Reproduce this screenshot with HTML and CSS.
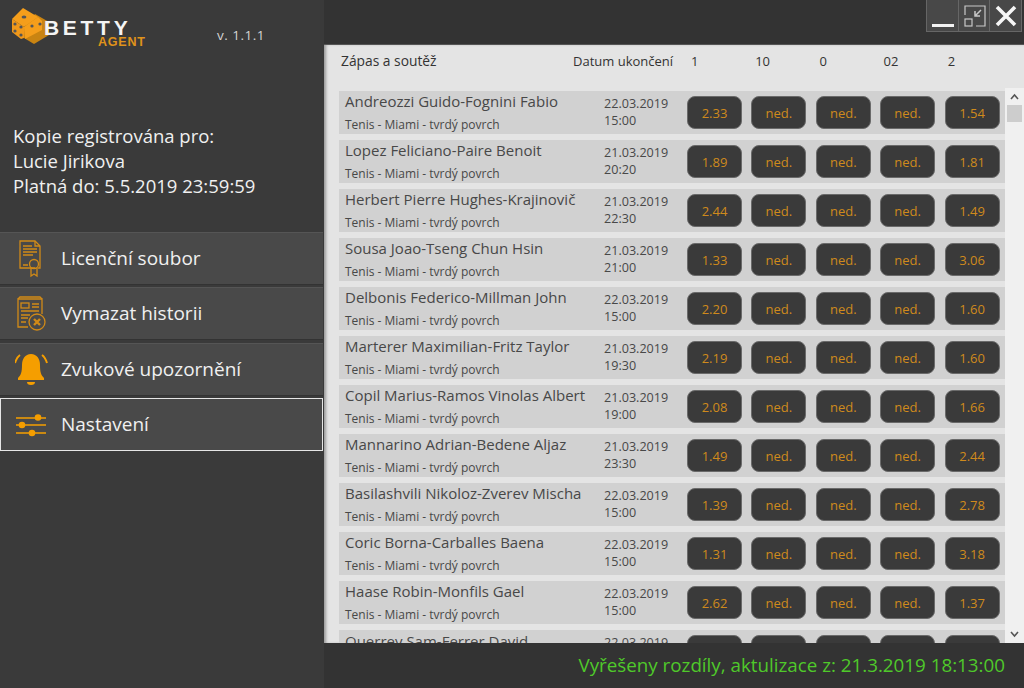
FILE: index.html
```html
<!DOCTYPE html>
<html lang="en">
<head>
  <meta charset="UTF-8">
  <title>Betty Agent</title>
  <link rel="stylesheet" href="styles.css">
</head>
<body>

<div class="app">
  <div class="sidebar">
    <div class="brand">
      <svg class="dice" width="40" height="36" viewBox="0 0 40 36">
        <polygon points="24,6 38,14 38,27 23,36 13,30 13,20" fill="#c98412"/>
        <polygon points="12,0 27,9 13,19 1,11" fill="#f59e1b"/>
        <polygon points="1,11 13,19 13,30 10,31 1,24" fill="#f0981a"/>
        <polygon points="13,19 27,9 31,13 31,22 14,31" fill="#f59e1b"/>
        <ellipse cx="13" cy="9" rx="2.4" ry="1.5" fill="#555"/>
        <circle cx="4" cy="16" r="1.6" fill="#555"/>
        <circle cx="10" cy="19" r="1.6" fill="#555"/>
        <circle cx="4" cy="23" r="1.6" fill="#555"/>
        <circle cx="10" cy="27" r="1.6" fill="#555"/>
        <circle cx="21" cy="18" r="1.6" fill="#555"/>
        <circle cx="29" cy="16" r="1.6" fill="#555"/>
      </svg>
      <div class="brand-name">
        <div class="betty">BETTY</div>
        <div class="agent">AGENT</div>
      </div>
      <div class="version">v. 1.1.1</div>
    </div>

    <div class="license">
      <div>Kopie registrována pro:</div>
      <div>Lucie Jirikova</div>
      <div>Platná do: 5.5.2019 23:59:59</div>
    </div>

    <div class="menu">
      <div class="menu-item">
        <svg class="menu-icon" width="34" height="38" viewBox="0 0 34 38" fill="none" stroke="#d18a17" stroke-width="1.3">
          <path d="M20 28H5V1h15l5 5v22h-2"/>
          <path d="M20 1v5h5"/>
          <path d="M8 6h9M8 9h14M8 12h14M8 15h10M8 25h5"/>
          <circle cx="19" cy="24" r="4.5"/>
          <path d="M16 28v8l3-2 3 2v-8"/>
        </svg>
        <span>Licenční soubor</span>
      </div>
      <div class="menu-item">
        <svg class="menu-icon" width="34" height="38" viewBox="0 0 34 38" fill="none" stroke="#d18a17" stroke-width="1.3">
          <path d="M13 32H3V4h24v15"/>
          <path d="M3 4l2-2h20l2 2"/>
          <rect x="6" y="8" width="8" height="5"/>
          <path d="M17 9h7M17 12h7M6 16h18M6 20h9M6 23h7M6 27h5"/>
          <circle cx="22" cy="27" r="8"/>
          <path d="M19 24l6 6M25 24l-6 6" stroke-width="2.4"/>
        </svg>
        <span>Vymazat historii</span>
      </div>
      <div class="menu-item">
        <svg class="menu-icon" width="34" height="38" viewBox="0 0 34 38">
          <path d="M16 3c-6 0-9 5-9 11 0 7-1 10-4 13v2h26v-2c-3-3-4-6-4-13 0-6-3-11-9-11z" fill="#f59e00"/>
          <path d="M12 31h8a4 3 0 0 1-8 0z" fill="#f59e00"/>
          <path d="M5 4C2 6 1 9 0 12M27 4c3 2 4 5 5 8" fill="none" stroke="#f59e00" stroke-width="2"/>
        </svg>
        <span>Zvukové upozornění</span>
      </div>
      <div class="menu-item selected">
        <svg class="menu-icon" width="34" height="38" viewBox="0 0 34 38" fill="#f59e00" stroke="#f59e00" stroke-width="1.6">
          <path d="M1 12h30M1 19h30M1 27h30"/>
          <circle cx="23" cy="11.500" r="2.500"/>
          <circle cx="7" cy="19" r="2.500"/>
          <circle cx="17" cy="27" r="2.500"/>
        </svg>
        <span>Nastavení</span>
      </div>
    </div>
  </div>

  <div class="main">
    <div class="topbar">
      <div class="window-buttons">
        <div class="win-btn">
          <svg width="30" height="30" viewBox="0 0 30 30"><rect x="5" y="23" width="22" height="3" fill="#f2f2f2"/></svg>
        </div>
        <div class="win-btn">
          <svg width="30" height="30" viewBox="0 0 30 30" fill="none" stroke="#c8c8c8" stroke-width="1.2">
            <path d="M6 14V5h20v20h-9"/>
            <rect x="6" y="18" width="7" height="7"/>
            <path d="M22 9l-6 6M16 10v5h5" stroke-width="1.5"/>
          </svg>
        </div>
        <div class="win-btn">
          <svg width="30" height="30" viewBox="0 0 30 30"><path d="M6 6l18 18M24 6L6 24" stroke="#f6f6f6" stroke-width="3.600"/></svg>
        </div>
      </div>
    </div>

    <div class="content">
      <div class="table-head">
        <div class="head-match">Zápas a soutěž</div>
        <div class="head-date">Datum ukončení</div>
        <div class="head-odd">1</div>
        <div class="head-odd">10</div>
        <div class="head-odd">0</div>
        <div class="head-odd">02</div>
        <div class="head-odd">2</div>
      </div>

      <div class="list-area">
        <div class="rows">
          <div class="row">
            <div class="match"><div class="match-name">Andreozzi Guido-Fognini Fabio</div><div class="match-info">Tenis - Miami - tvrdý povrch</div></div>
            <div class="date">22.03.2019<br>15:00</div>
            <div class="odd">2.33</div><div class="odd">ned.</div><div class="odd">ned.</div><div class="odd">ned.</div><div class="odd">1.54</div>
          </div>
          <div class="row">
            <div class="match"><div class="match-name">Lopez Feliciano-Paire Benoit</div><div class="match-info">Tenis - Miami - tvrdý povrch</div></div>
            <div class="date">21.03.2019<br>20:20</div>
            <div class="odd">1.89</div><div class="odd">ned.</div><div class="odd">ned.</div><div class="odd">ned.</div><div class="odd">1.81</div>
          </div>
          <div class="row">
            <div class="match"><div class="match-name">Herbert Pierre Hughes-Krajinovič</div><div class="match-info">Tenis - Miami - tvrdý povrch</div></div>
            <div class="date">21.03.2019<br>22:30</div>
            <div class="odd">2.44</div><div class="odd">ned.</div><div class="odd">ned.</div><div class="odd">ned.</div><div class="odd">1.49</div>
          </div>
          <div class="row">
            <div class="match"><div class="match-name">Sousa Joao-Tseng Chun Hsin</div><div class="match-info">Tenis - Miami - tvrdý povrch</div></div>
            <div class="date">21.03.2019<br>21:00</div>
            <div class="odd">1.33</div><div class="odd">ned.</div><div class="odd">ned.</div><div class="odd">ned.</div><div class="odd">3.06</div>
          </div>
          <div class="row">
            <div class="match"><div class="match-name">Delbonis Federico-Millman John</div><div class="match-info">Tenis - Miami - tvrdý povrch</div></div>
            <div class="date">22.03.2019<br>15:00</div>
            <div class="odd">2.20</div><div class="odd">ned.</div><div class="odd">ned.</div><div class="odd">ned.</div><div class="odd">1.60</div>
          </div>
          <div class="row">
            <div class="match"><div class="match-name">Marterer Maximilian-Fritz Taylor</div><div class="match-info">Tenis - Miami - tvrdý povrch</div></div>
            <div class="date">21.03.2019<br>19:30</div>
            <div class="odd">2.19</div><div class="odd">ned.</div><div class="odd">ned.</div><div class="odd">ned.</div><div class="odd">1.60</div>
          </div>
          <div class="row">
            <div class="match"><div class="match-name">Copil Marius-Ramos Vinolas Albert</div><div class="match-info">Tenis - Miami - tvrdý povrch</div></div>
            <div class="date">21.03.2019<br>19:00</div>
            <div class="odd">2.08</div><div class="odd">ned.</div><div class="odd">ned.</div><div class="odd">ned.</div><div class="odd">1.66</div>
          </div>
          <div class="row">
            <div class="match"><div class="match-name">Mannarino Adrian-Bedene Aljaz</div><div class="match-info">Tenis - Miami - tvrdý povrch</div></div>
            <div class="date">21.03.2019<br>23:30</div>
            <div class="odd">1.49</div><div class="odd">ned.</div><div class="odd">ned.</div><div class="odd">ned.</div><div class="odd">2.44</div>
          </div>
          <div class="row">
            <div class="match"><div class="match-name">Basilashvili Nikoloz-Zverev Mischa</div><div class="match-info">Tenis - Miami - tvrdý povrch</div></div>
            <div class="date">22.03.2019<br>15:00</div>
            <div class="odd">1.39</div><div class="odd">ned.</div><div class="odd">ned.</div><div class="odd">ned.</div><div class="odd">2.78</div>
          </div>
          <div class="row">
            <div class="match"><div class="match-name">Coric Borna-Carballes Baena</div><div class="match-info">Tenis - Miami - tvrdý povrch</div></div>
            <div class="date">22.03.2019<br>15:00</div>
            <div class="odd">1.31</div><div class="odd">ned.</div><div class="odd">ned.</div><div class="odd">ned.</div><div class="odd">3.18</div>
          </div>
          <div class="row">
            <div class="match"><div class="match-name">Haase Robin-Monfils Gael</div><div class="match-info">Tenis - Miami - tvrdý povrch</div></div>
            <div class="date">22.03.2019<br>15:00</div>
            <div class="odd">2.62</div><div class="odd">ned.</div><div class="odd">ned.</div><div class="odd">ned.</div><div class="odd">1.37</div>
          </div>
          <div class="row row-cut">
            <div class="match"><div class="match-name">Querrey Sam-Ferrer David</div></div>
            <div class="date">22.03.2019</div>
            <div class="odd"></div><div class="odd"></div><div class="odd"></div><div class="odd"></div><div class="odd"></div>
          </div>
        </div>

        <div class="scrollbar">
          <svg width="19" height="17" viewBox="0 0 19 17"><path d="M6 11l3.500-4 3.500 4" fill="none" stroke="#555" stroke-width="1.600"/></svg>
          <div class="thumb"></div>
          <svg class="arrow-down" width="19" height="17" viewBox="0 0 19 17"><path d="M6 6l3.500 4 3.500-4" fill="none" stroke="#555" stroke-width="1.600"/></svg>
        </div>
      </div>
    </div>

    <div class="statusbar">Vyřešeny rozdíly, aktulizace z: 21.3.2019 18:13:00</div>
  </div>
</div>

</body>
</html>
```

FILE: styles.css
```css
body {
  margin: 0;
  font-family: 'Open Sans', sans-serif;
  background-color: #333;
}

.app {
  display: flex;
  width: 1024px;
  height: 688px;
  overflow: hidden;
}

.sidebar {
  width: 324px;
  flex: none;
  box-sizing: border-box;
  background-color: #3a3a3a;
  padding-right: 1px;
}

.brand {
  display: flex;
  align-items: flex-start;
  height: 123px;
  padding: 8px 0 0 11px;
  box-sizing: border-box;
}

.dice {
  flex: none;
}

.brand-name {
  margin: 11px 0 0 -7px;
  width: 100px;
  flex: none;
}

.betty {
  font-family: 'Liberation Sans', sans-serif;
  font-weight: bold;
  font-size: 21px;
  line-height: 17px;
  letter-spacing: 3.700px;
  color: #f4f4f4;
}

.agent {
  font-family: 'Liberation Sans', sans-serif;
  font-weight: bold;
  font-size: 12.500px;
  line-height: 10px;
  letter-spacing: 0.800px;
  color: #e0931a;
  margin: 1px 0 0 54px;
}

.version {
  margin: 18px 0 0 73px;
  font-size: 13.500px;
  color: #d4d4d4;
  letter-spacing: 0.500px;
}

.license {
  padding-left: 13px;
  font-size: 18.500px;
  line-height: 25px;
  color: #f0f0f0;
  height: 109px;
}

.menu {
  display: flex;
  flex-direction: column;
  gap: 2px;
}

.menu-item {
  display: flex;
  align-items: center;
  height: 53px;
  box-sizing: border-box;
  background-color: #494949;
  border-top: 1px solid #555;
  border-bottom: 1px solid #333;
  padding-left: 15px;
  font-size: 19px;
  color: #f0f0f0;
}

.menu-item:nth-child(3) {
  margin-top: 1px;
}

.menu-item span {
  margin: -2px 0 0 12px;
}

.menu-icon {
  flex: none;
}

.selected {
  border: 1px solid #e6e6e6;
  padding-left: 14px;
}

.main {
  flex: 1;
  display: flex;
  flex-direction: column;
  min-width: 0;
}

.topbar {
  height: 45px;
  flex: none;
  display: flex;
  justify-content: flex-end;
  background-color: #333;
  border-bottom: 1px solid #555;
  box-sizing: border-box;
}

.window-buttons {
  display: flex;
  width: 96px;
  height: 32px;
  margin-right: 2px;
  border: 1px solid #666;
  border-top: none;
  box-sizing: border-box;
}

.win-btn {
  flex: 1;
  display: flex;
  align-items: center;
  justify-content: center;
  background-color: #484848;
  border-right: 1px solid #666;
}

.win-btn:last-child {
  border-right: none;
}

.content {
  flex: 1;
  min-height: 0;
  display: flex;
  flex-direction: column;
  background-color: #e4e4e4;
  box-shadow: inset 3px 0 3px -1px #9a9a9a;
  overflow: hidden;
}

.table-head {
  display: flex;
  height: 43px;
  flex: none;
  box-sizing: border-box;
  padding: 7px 0 0 17px;
  font-size: 13px;
  line-height: 18px;
  color: #333;
}

.head-match {
  width: 232px;
  font-size: 13.800px;
}

.head-date {
  width: 118px;
}

.head-odd {
  width: 64.200px;
}

.list-area {
  flex: 1;
  min-height: 0;
  display: flex;
  padding-left: 15px;
}

.rows {
  width: 666px;
  padding-top: 3px;
  display: flex;
  flex-direction: column;
  gap: 6px;
}

.row {
  flex: none;
  display: flex;
  align-items: center;
  height: 43px;
  background-color: #d1d1d1;
  color: #484848;
}

.row-cut {
  height: 13px;
  align-items: flex-start;
  overflow: hidden;
}

.row-cut .match-name {
  margin-top: 1px;
}

.row-cut .date {
  margin-top: 4px;
}

.row-cut .odd {
  margin-top: 5px;
}

.match {
  width: 265px;
  flex: none;
  padding-left: 6px;
  box-sizing: border-box;
}

.match-name {
  font-size: 15px;
  line-height: 20px;
  white-space: nowrap;
  margin-top: -2px;
}

.match-info {
  font-size: 12px;
  line-height: 16px;
  margin-top: 6px;
}

.date {
  width: 83px;
  flex: none;
  font-size: 12.600px;
  line-height: 17px;
  margin-top: -2px;
}

.odd {
  width: 55px;
  height: 33px;
  flex: none;
  margin-right: 9.400px;
  box-sizing: border-box;
  display: flex;
  align-items: center;
  justify-content: center;
  background-color: #3a3a3a;
  border: 1px solid #6a6a6a;
  border-radius: 8px;
  color: #cf8a1c;
  font-size: 13px;
}

.scrollbar {
  width: 19px;
  flex: none;
  display: flex;
  flex-direction: column;
  background-color: #f0f0f0;
}

.thumb {
  width: 15px;
  height: 17px;
  margin-left: 2px;
  background-color: #cdcdcd;
}

.arrow-down {
  margin-top: auto;
}

.statusbar {
  height: 45px;
  flex: none;
  box-sizing: border-box;
  background-color: #333;
  text-align: right;
  padding: 9px 19px 0 0;
  font-size: 18.800px;
  line-height: 26px;
  color: #4fc92a;
}
```
